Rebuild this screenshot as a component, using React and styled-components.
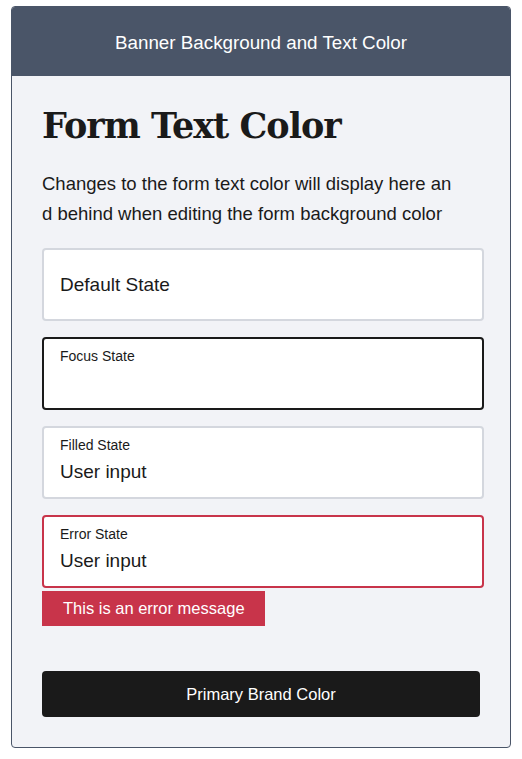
import React from 'react';
import styled, { createGlobalStyle } from 'styled-components';

const GlobalStyle = createGlobalStyle`
  body {
    margin: 0;
    background: #ffffff;
    font-family: "Liberation Sans", Arial, sans-serif;
  }
  * { box-sizing: border-box; }
`;

const Page = styled.div`
  padding: 6px 11px 13px 11px;
`;

const Card = styled.div`
  border: 1px solid #4a5568;
  border-radius: 4px;
  overflow: hidden;
  background: #f2f3f7;
`;

const Banner = styled.div`
  height: 69px;
  padding-top: 2px;
  background: #4a5568;
  color: #ffffff;
  display: flex;
  align-items: center;
  justify-content: center;
  font-size: 18.8px;
`;

const Body = styled.div`
  padding: 27px 30px 30px 30px;
  display: flex;
  flex-direction: column;
`;

const Heading = styled.h1`
  margin: 0;
  font-family: "DejaVu Serif", "Liberation Serif", serif;
  font-weight: 700;
  font-size: 35px;
  letter-spacing: -1px;
  line-height: 46px;
  color: #1a1a1a;
`;

const Intro = styled.p`
  margin: 20px 0 20px 0;
  font-size: 18.5px;
  line-height: 29.5px;
  color: #1a1a1a;
  white-space: nowrap;
`;

const Fields = styled.div`
  display: flex;
  flex-direction: column;
  gap: 16px;
  margin-right: -4px;
`;

const Field = styled.div`
  height: 73px;
  background: #ffffff;
  border: 2px solid ${p => p.$border};
  border-radius: 4px;
  padding: ${p => (p.$single ? '0 16px' : '7px 16px 0 16px')};
  display: flex;
  flex-direction: column;
  justify-content: ${p => (p.$single ? 'center' : 'flex-start')};
  color: #1a1a1a;
`;

const Label = styled.div`
  font-size: 14px;
  line-height: 20px;
`;

const Value = styled.div`
  font-size: 19px;
  line-height: 26px;
  margin-top: ${p => (p.$under ? '4px' : '0')};
`;

const ErrorGroup = styled.div`
  display: flex;
  flex-direction: column;
  align-items: stretch;
  gap: 3px;
`;

const ErrorMessage = styled.div`
  align-self: flex-start;
  background: #c8344a;
  color: #ffffff;
  font-size: 16.5px;
  height: 35px;
  padding: 0 20px 0 21px;
  display: flex;
  align-items: center;
`;

const PrimaryButton = styled.button`
  margin-top: 45px;
  height: 46px;
  width: 100%;
  border: none;
  border-radius: 4px;
  background: #1a1a1a;
  color: #ffffff;
  font-family: inherit;
  font-size: 16.5px;
  cursor: pointer;
`;

const App = () => {
  return (
    <Page>
      <GlobalStyle />
      <Card>
        <Banner>Banner Background and Text Color</Banner>
        <Body>
          <Heading>Form Text Color</Heading>
          <Intro>
            Changes to the form text color will display here an
            <br />
            d behind when editing the form background color
          </Intro>
          <Fields>
            <Field $border="#d4d7de" $single>
              <Value>Default State</Value>
            </Field>
            <Field $border="#1a1a1a">
              <Label>Focus State</Label>
            </Field>
            <Field $border="#d4d7de">
              <Label>Filled State</Label>
              <Value $under>User input</Value>
            </Field>
            <ErrorGroup>
              <Field $border="#c8344a">
                <Label>Error State</Label>
                <Value $under>User input</Value>
              </Field>
              <ErrorMessage>This is an error message</ErrorMessage>
            </ErrorGroup>
          </Fields>
          <PrimaryButton>Primary Brand Color</PrimaryButton>
        </Body>
      </Card>
    </Page>
  );
};

export default App;
